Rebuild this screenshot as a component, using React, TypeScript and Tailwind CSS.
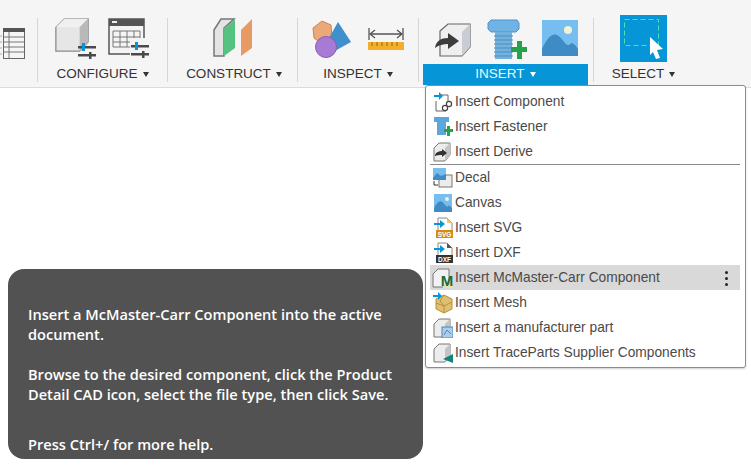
import type { ReactNode } from 'react';

const FONT = "font-['Liberation_Sans',Arial,sans-serif]";

const Box = ({ x = 0, y = 0, s = 40 }: { x?: number; y?: number; s?: number }) => (
  <g transform={`translate(${x} ${y}) scale(${s / 40})`}>
    <path d="M1 11 L11 1 H39 V28 L29 39 H1 Z" fill="#e6e6e6" stroke="#8b8b8b" strokeWidth="1.5" />
    <path d="M1 11 L11 1 H39 L29 11 Z" fill="#f0f0f0" />
    <path d="M29 11 L39 1 V28 L29 39 Z" fill="#b9b9b9" />
  </g>
);

const Sliders = ({ x, y }: { x: number; y: number }) => (
  <g transform={`translate(${x} ${y})`}>
    <rect x="0" y="2" width="18" height="2.5" fill="#4a4a4a" />
    <rect x="0" y="10" width="18" height="2.5" fill="#4a4a4a" />
    <rect x="4" y="-1" width="3" height="8" fill="#0696d7" />
    <rect x="11" y="8" width="2.5" height="7" fill="#4a4a4a" />
  </g>
);

const ConfigBox = () => (
  <svg width="44" height="44" viewBox="0 0 44 44">
    <Box x={1} y={2} s={34} />
    <Sliders x={24} y={28} />
  </svg>
);

const ConfigTable = () => (
  <svg width="44" height="44" viewBox="0 0 44 44">
    <rect x="1" y="3" width="35" height="35" fill="#f4f4f4" stroke="#555" strokeWidth="1.5" />
    <rect x="1" y="3" width="35" height="7" fill="#555" />
    <rect x="4" y="5" width="5" height="2" fill="#eee" />
    <path d="M5 15 H32 V31 H5 Z M5 21 H32 M5 26 H32 M12 15 V31 M19 15 V31 M26 15 V31" fill="none" stroke="#777" />
    <rect x="22" y="22" width="22" height="20" fill="#f4f4f4" />
    <Sliders x={23} y={27} />
  </svg>
);

const ConstructIcon = () => (
  <svg width="44" height="44" viewBox="0 0 44 44">
    <path d="M2 14 L9 3 H22 L12 12 V40 H2 Z" fill="#e4e4e4" stroke="#777" strokeWidth="1.5" />
    <path d="M12 13 L23 3 V32 L12 40 Z" fill="#55c37f" />
    <path d="M29 14 L40 3 V32 L29 40 Z" fill="#e79a64" />
  </svg>
);

const ShapesIcon = () => (
  <svg width="42" height="44" viewBox="0 0 42 44">
    <path d="M2 12 L11 5 L20 9 L21 20 L11 28 L3 22 Z" fill="#eba878" stroke="#c98552" />
    <path d="M27 6 L40 26 L22 36 L18 22 Z" fill="#3f90cc" />
    <circle cx="15" cy="31" r="10.5" fill="#a77ad6" stroke="#8a5fb8" />
  </svg>
);

const RulerIcon = () => (
  <svg width="38" height="44" viewBox="0 0 38 44">
    <path d="M2 12 V24 M36 12 V24 M3 18 H35 M3 18 L8 14 M3 18 L8 22 M35 18 L30 14 M35 18 L30 22" fill="none" stroke="#555" strokeWidth="1.3" />
    <rect x="1" y="26" width="36" height="8" fill="#f4ae2a" />
    <path d="M5 26 V30 M10 26 V30 M15 26 V30 M20 26 V30 M25 26 V30 M30 26 V30" stroke="#8a6a20" />
  </svg>
);

const DeriveIcon = () => (
  <svg width="38" height="44" viewBox="0 0 38 44">
    <path d="M6 15 L14 8 H36 V31 L28 40 H6 Z" fill="#efefef" stroke="#666" strokeWidth="1.2" />
    <path d="M28 16 L36 8 V31 L28 40 Z" fill="#c9ccd2" />
    <path d="M1 32 C2 25 7 22 14 22 V17 L25 25 L14 33 V28 C9 28 5 29 1 32 Z" fill="#3c3c3c" />
  </svg>
);

const BoltIcon = () => (
  <svg width="40" height="44" viewBox="0 0 40 44">
    <path d="M1 7 L4 4 H30 L32 7 V13 L29 16 H4 L1 13 Z" fill="#6fb2e4" stroke="#4f94c9" />
    <rect x="8" y="16" width="17" height="27" fill="#74b2de" />
    <path d="M7 20 H26 M7 24 H26 M7 28 H26 M7 32 H26 M7 36 H26 M7 40 H26" stroke="#4b8dbf" />
    <path d="M24 31 H30 V25 H35 V31 H40 V36 H35 V43 H30 V36 H24 Z" fill="#24a348" />
  </svg>
);

const PictureIcon = ({ s = 36 }: { s?: number }) => (
  <svg width={s} height={s} viewBox="0 0 36 36">
    <rect width="36" height="36" fill="#76bdf0" />
    <path d="M0 29 C5 18 10 13 15 15 C21 18 23 26 27 25 C30 21 33 24 36 29 V36 H0 Z" fill="#3f8cc4" />
    <circle cx="26" cy="10" r="4" fill="#f1f2d4" />
  </svg>
);

const SelectIcon = () => (
  <svg width="47" height="47" viewBox="0 0 47 47">
    <rect width="47" height="47" fill="#0696d7" />
    <rect x="4.5" y="4.5" width="34" height="26" fill="none" stroke="#4fe0b0" strokeDasharray="5 3" />
    <path d="M30 22 L43 34 L37 35 L40 43 L36 44 L33 37 L30 40 Z" fill="#fff" />
  </svg>
);

const FileSmall = ({ tag, tagFill, fold }: { tag: string; tagFill: string; fold: string }) => (
  <svg width="20" height="22" viewBox="0 0 20 22">
    <path d="M5 1 H14 L19 6 V14 H5 Z" fill="#fff" stroke="#888" />
    <path d="M14 1 L19 6 H14 Z" fill={fold} />
    <path d="M1 6 H7 V3 L12 7 L7 11 V8 H1 Z" fill="#0696d7" />
    <rect x="3" y="13" width="17" height="8" fill={tagFill} />
    <text x="11.5" y="19.5" fontSize="6.5" fontWeight="700" fontFamily="Liberation Sans" fill="#fff" textAnchor="middle">{tag}</text>
  </svg>
);

const GreyBox = ({ children }: { children?: ReactNode }) => (
  <svg width="20" height="20" viewBox="0 0 20 20">
    <path d="M1 6 L6 1 H17 V13 L12 19 H1 Z" fill="#ececec" stroke="#777" />
    <path d="M12 6 L17 1 V13 L12 19 Z" fill="#c4c4c4" />
    {children}
  </svg>
);

const menuIcons: Record<string, ReactNode> = {
  component: (
    <svg width="20" height="20" viewBox="0 0 20 20">
      <path d="M3 9 V19 H13 M15 9 V3 H8" fill="none" stroke="#666" />
      <path d="M1 3 H6 V0 L10 4 L6 8 V5 H1 Z" fill="#0696d7" />
      <circle cx="12" cy="16" r="2.6" fill="#fff" stroke="#444" strokeWidth="1.2" />
      <circle cx="16" cy="12" r="2.6" fill="#fff" stroke="#444" strokeWidth="1.2" />
    </svg>
  ),
  fastener: (
    <svg width="20" height="20" viewBox="0 0 20 20">
      <rect x="1" y="0" width="15" height="5" fill="#59a6dc" />
      <rect x="4" y="5" width="9" height="13" fill="#5da7dc" />
      <path d="M11 12 H14 V9 H17 V12 H20 V15 H17 V19 H14 V15 H11 Z" fill="#24a348" />
    </svg>
  ),
  derive: (
    <GreyBox>
      <path d="M2 13 C3 10 6 9 9 9 V7 L14 11 L9 15 V13 C6 13 4 13 2 14 Z" fill="#333" />
    </GreyBox>
  ),
  decal: (
    <svg width="20" height="20" viewBox="0 0 20 20">
      <rect x="6" y="7" width="13" height="12" fill="#ececec" stroke="#777" />
      <rect x="0" y="0" width="13" height="12" fill="#76bdf0" />
      <path d="M0 10 L4 5 L8 8 L13 6 V12 H0 Z" fill="#3f8cc4" />
      <path d="M1 13 V17 H5" fill="none" stroke="#333" />
    </svg>
  ),
  canvas: <PictureIcon s={18} />,
  svg: <FileSmall tag="SVG" tagFill="#d78c16" fold="#f2c46b" />,
  dxf: <FileSmall tag="DXF" tagFill="#333" fold="#555" />,
  mcmaster: (
    <svg width="22" height="20" viewBox="0 0 22 20">
      <path d="M1 6 L6 1 H17 V16 L12 19 H1 Z" fill="#f2f2f2" stroke="#777" />
      <rect x="11" y="17" width="10" height="3" fill="#e9e2a4" />
      <text x="15" y="18" fontSize="15" fontWeight="700" fontFamily="Liberation Sans" fill="#1c6b34" textAnchor="middle">M</text>
    </svg>
  ),
  mesh: (
    <svg width="20" height="22" viewBox="0 0 20 22">
      <path d="M3 7 L11 3 L19 7 V17 L11 21 L3 17 Z" fill="#e0bf70" stroke="#b5913f" />
      <path d="M3 11 L11 14 L19 10 M11 3 L7 9 L11 14 V21" fill="none" stroke="#b5913f" />
      <path d="M0 3 H5 V0 L9 4 L5 8 V5 H0 Z" fill="#0696d7" />
    </svg>
  ),
  part: (
    <GreyBox>
      <rect x="9" y="9" width="11" height="11" fill="#a9cdea" stroke="#4d86b5" />
      <path d="M11 17 L14 12 L18 16" fill="none" stroke="#4d86b5" />
    </GreyBox>
  ),
  traceparts: (
    <GreyBox>
      <path d="M20 11 L10 16 L20 20 Z" fill="#10837a" />
    </GreyBox>
  ),
};

const Separator = () => <div className="mt-[18px] h-[64px] w-px shrink-0 bg-[#d6d6d6]" />;

const Caret = ({ color = 'border-t-[#333]' }: { color?: string }) => (
  <span className={`ml-[5px] inline-block border-x-[3.5px] border-t-[5px] border-x-transparent ${color}`} />
);

const Group = ({ label, width, gap, children }: { label: string; width: string; gap: string; children: ReactNode }) => (
  <div className={`${width} shrink-0`}>
    <div className={`flex h-[64px] justify-center pt-4 ${gap}`}>{children}</div>
    <div className="flex h-[21px] items-center justify-center text-[13.5px] text-[#333]">
      {label}
      <Caret />
    </div>
  </div>
);

const items = [
  { key: 'component', label: 'Insert Component' },
  { key: 'fastener', label: 'Insert Fastener' },
  { key: 'derive', label: 'Insert Derive' },
  { key: 'decal', label: 'Decal', divider: true },
  { key: 'canvas', label: 'Canvas' },
  { key: 'svg', label: 'Insert SVG' },
  { key: 'dxf', label: 'Insert DXF' },
  { key: 'mcmaster', label: 'Insert McMaster-Carr Component', active: true },
  { key: 'mesh', label: 'Insert Mesh' },
  { key: 'part', label: 'Insert a manufacturer part' },
  { key: 'traceparts', label: 'Insert TraceParts Supplier Components' },
];

export default function App() {
  return (
    <div className={`relative h-[465px] w-[751px] overflow-hidden bg-white ${FONT}`}>
      <div className="flex h-[88px] border-b border-[#dcdcdc] bg-[#f5f5f5]">
        <div className="w-[37px] shrink-0 pt-4">
          <svg width="26" height="44" viewBox="0 0 26 44">
            <rect x="3.5" y="12.5" width="21" height="30" fill="#f6f6f6" stroke="#666" />
            <rect x="3" y="12" width="22" height="4" fill="#555" />
            <path d="M4 21 H24 M4 26 H24 M4 31 H24 M4 36 H24 M9 16 V42" stroke="#777" />
            <path d="M0 20 H2 M0 26 H2 M0 32 H2 M0 38 H2" stroke="#aaa" />
          </svg>
        </div>
        <Separator />
        <Group label="CONFIGURE" width="w-[129px]" gap="gap-[10px]">
          <ConfigBox />
          <ConfigTable />
        </Group>
        <Separator />
        <Group label="CONSTRUCT" width="w-[129px] pl-[3px]" gap="gap-0">
          <ConstructIcon />
        </Group>
        <Separator />
        <Group label="INSPECT" width="w-[120px]" gap="gap-[14px]">
          <ShapesIcon />
          <RulerIcon />
        </Group>
        <Separator />
        <div className="ml-1 w-[165px] shrink-0">
          <div className="flex h-[64px] justify-center gap-[15px] pt-4">
            <DeriveIcon />
            <BoltIcon />
            <div className="pt-1">
              <PictureIcon />
            </div>
          </div>
          <div className="flex h-[21px] items-center justify-center bg-[#0696d7] text-[13.5px] text-[#e8f6fd]">
            INSERT
            <Caret color="border-t-white" />
          </div>
        </div>
        <div className="ml-[5px] flex">
          <Separator />
        </div>
        <div className="w-[99px] shrink-0">
          <div className="flex h-[64px] justify-center pt-[15px]">
            <SelectIcon />
          </div>
          <div className="flex h-[21px] items-center justify-center text-[13.5px] text-[#333]">
            SELECT
            <Caret />
          </div>
        </div>
      </div>

      <div className="absolute left-[425px] top-[85px] w-[321px] rounded-[3px] border border-[#8c8c8c] bg-white pl-[4px] pr-[5px] pt-[3px] pb-[2px] shadow-[0_1px_2px_rgba(0,0,0,0.2)]">
        {items.map((item) => (
          <div key={item.key}>
            {item.divider && <div className="h-px bg-[#8a8a8a]" />}
            <div className={`relative flex h-[25px] items-center text-[13.75px] text-[#4a4a4a] ${item.active ? 'bg-[#d9d9d9]' : ''}`}>
              <span className="flex w-[25px] shrink-0 justify-center">{menuIcons[item.key]}</span>
              <span className="whitespace-nowrap pt-px">{item.label}</span>
              {item.active && (
                <span className="absolute right-[12px] top-[6px] flex flex-col gap-[3px]">
                  <span className="size-[3px] rounded-full bg-[#222]" />
                  <span className="size-[3px] rounded-full bg-[#222]" />
                  <span className="size-[3px] rounded-full bg-[#222]" />
                </span>
              )}
            </div>
          </div>
        ))}
      </div>

      <div className="absolute left-2 top-[269px] h-[190px] w-[415px] rounded-2xl bg-[#525252] px-5 pt-[35px] font-['Open_Sans',sans-serif] text-[14.6px] leading-5 font-semibold text-white">
        <p>Insert a McMaster-Carr Component into the active document.</p>
        <p className="mt-5">Browse to the desired component, click the Product Detail CAD icon, select the file type, then click Save.</p>
        <p className="mt-[30px]">Press Ctrl+/ for more help.</p>
      </div>
    </div>
  );
}
